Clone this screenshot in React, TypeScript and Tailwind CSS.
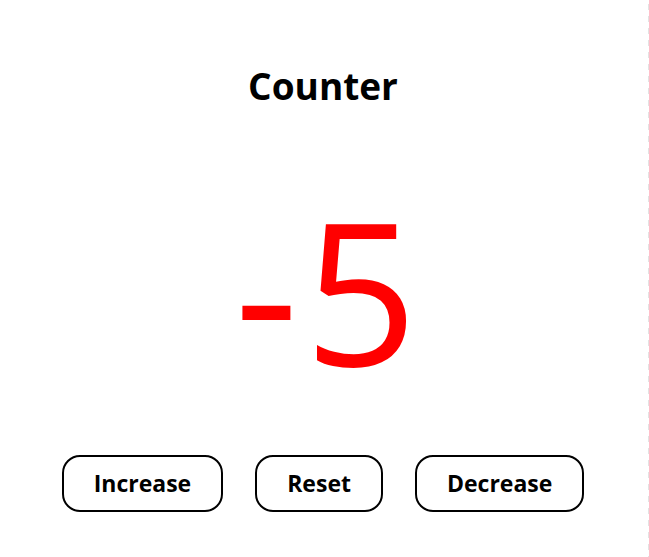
import { useState } from 'react'

export default function App() {
  const [count, setCount] = useState(-5)

  const color = count < 0 ? 'text-[#ff0000]' : count > 0 ? 'text-[#008000]' : 'text-black'

  return (
    <div className="relative h-[557px] w-full bg-white font-['Open_Sans','Noto_Sans',sans-serif] text-black">
      <div className="flex flex-col items-center pr-[3px]">
        <h1 className="mt-[67px] text-[37px] font-bold leading-none">Counter</h1>
        <p className={`mt-[86px] text-[198px] font-normal leading-none tracking-[6px] pl-[12px] ${color}`}>{count}</p>
        <div className="mt-[67px] flex gap-8">
          <button
            onClick={() => setCount(count + 1)}
            className="flex h-[57px] items-center rounded-[18px] border-2 border-black px-[30px] text-[23px] font-bold"
          >
            Increase
          </button>
          <button
            onClick={() => setCount(0)}
            className="flex h-[57px] items-center rounded-[18px] border-2 border-black px-[30px] text-[23px] font-bold"
          >
            Reset
          </button>
          <button
            onClick={() => setCount(count - 1)}
            className="flex h-[57px] items-center rounded-[18px] border-2 border-black px-[30px] text-[23px] font-bold"
          >
            Decrease
          </button>
        </div>
      </div>
      {/* dashed edge on the right */}
      <div className="absolute right-0 top-0 h-full w-px bg-[repeating-linear-gradient(to_bottom,transparent_0_4px,#e3e3e3_4px_10px,transparent_10px_12px)]" />
    </div>
  )
}
